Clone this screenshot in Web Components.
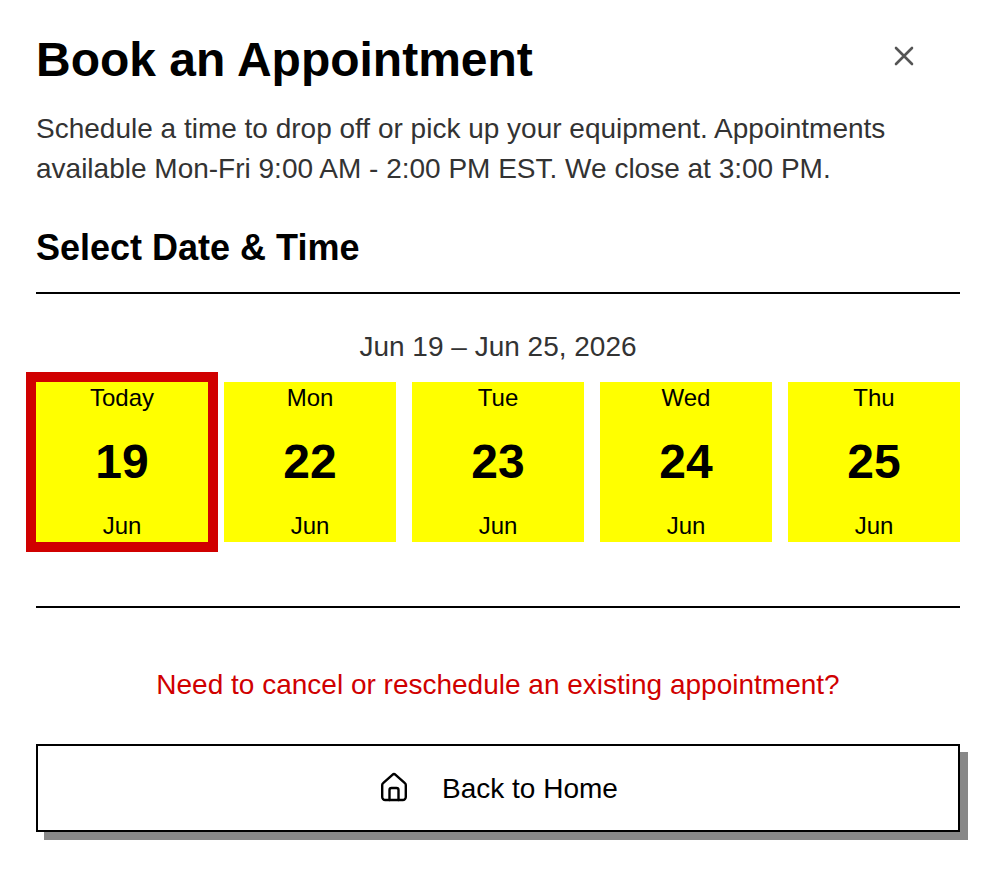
<!DOCTYPE html>
<html>
<head>
<meta charset="utf-8">
<title>Book an Appointment</title>
<style>
  body { margin: 0; background: #fff; font-family: "Liberation Sans", Arial, sans-serif; }
</style>
</head>
<body>
<booking-dialog>
  <date-strip range="Jun 19 – Jun 25, 2026">
    <day-card label="Today" num="19" month="Jun" selected></day-card>
    <day-card label="Mon" num="22" month="Jun"></day-card>
    <day-card label="Tue" num="23" month="Jun"></day-card>
    <day-card label="Wed" num="24" month="Jun"></day-card>
    <day-card label="Thu" num="25" month="Jun"></day-card>
  </date-strip>
</booking-dialog>
<script>
class DayCard extends HTMLElement {
  constructor() {
    super();
    this.attachShadow({ mode: 'open' });
  }
  connectedCallback() {
    this.shadowRoot.innerHTML = `
    <style>
      :host {
        display: flex;
        flex-direction: column;
        align-items: center;
        justify-content: space-between;
        height: 160px;
        background: #ffff00;
        color: #000;
        font-size: 24px;
        line-height: 32px;
      }
      :host([selected]) { outline: 10px solid #d00000; }
      .num { font-size: 48px; font-weight: bold; line-height: 56px; }
    </style>
    <div>${this.getAttribute('label')}</div>
    <div class="num">${this.getAttribute('num')}</div>
    <div>${this.getAttribute('month')}</div>
    `;
  }
}

class DateStrip extends HTMLElement {
  constructor() {
    super();
    this.attachShadow({ mode: 'open' });
  }
  connectedCallback() {
    this.shadowRoot.innerHTML = `
    <style>
      :host {
        display: block;
        border-top: 2px solid #000;
        border-bottom: 2px solid #000;
        padding: 36px 0 64px;
      }
      .range {
        text-align: center;
        font-size: 28px;
        line-height: 34px;
        color: #333;
        margin-bottom: 18px;
      }
      .days { display: grid; grid-template-columns: repeat(5, 1fr); gap: 16px; }
    </style>
    <div class="range">${this.getAttribute('range')}</div>
    <div class="days"><slot></slot></div>
    `;
  }
}

class BackButton extends HTMLElement {
  constructor() {
    super();
    this.attachShadow({ mode: 'open' });
  }
  connectedCallback() {
    this.shadowRoot.innerHTML = `
    <style>
      :host {
        display: flex;
        align-items: center;
        justify-content: center;
        gap: 32px;
        height: 84px;
        border: 2px solid #000;
        background: #fff;
        box-shadow: 8px 8px 0 #888;
        font-size: 28px;
        color: #000;
      }
      svg { display: block; }
      span { padding-top: 2px; }
    </style>
    <svg width="32" height="32" viewBox="0 0 32 32" fill="none" stroke="#000" stroke-width="2.4" stroke-linecap="round" stroke-linejoin="round">
      <path d="M4.2 13 a2.5 2.5 0 0 1 .9 -1.9 L14.4 2.8 a2.4 2.4 0 0 1 3.2 0 L26.9 11.1 a2.5 2.5 0 0 1 .9 1.9 V25 a3 3 0 0 1 -3 3 H7.2 a3 3 0 0 1 -3 -3 Z"/>
      <path d="M11.5 28 V18 a2 2 0 0 1 2 -2 h5 a2 2 0 0 1 2 2 v10"/>
    </svg>
    <span><slot></slot></span>
    `;
  }
}

class BookingDialog extends HTMLElement {
  constructor() {
    super();
    this.attachShadow({ mode: 'open' });
  }
  connectedCallback() {
    this.shadowRoot.innerHTML = `
    <style>
      :host {
        display: block;
        padding: 30px 34px 30px 36px;
        color: #000;
      }
      header { display: flex; justify-content: space-between; align-items: flex-start; }
      h1 { margin: 0; font-size: 48px; line-height: 60px; font-weight: bold; }
      .close { margin: 8px 38px 0 0; display: block; }
      p { margin: 19px 0 0; font-size: 28px; line-height: 40px; color: #333; }
      h2 { margin: 37px 0 22px; font-size: 36px; line-height: 44px; font-weight: bold; }
      .link { text-align: center; color: #d00000; font-size: 28px; line-height: 36px; margin: 59px 0 41px; }
    </style>
    <header>
      <h1>Book an Appointment</h1>
      <svg class="close" width="36" height="36" viewBox="0 0 36 36" fill="none" stroke="#555" stroke-width="2.6" stroke-linecap="round">
        <path d="M10 10 L26 26 M26 10 L10 26"/>
      </svg>
    </header>
    <p>Schedule a time to drop off or pick up your equipment. Appointments available Mon-Fri 9:00 AM - 2:00 PM EST. We close at 3:00 PM.</p>
    <h2>Select Date &amp; Time</h2>
    <slot></slot>
    <div class="link">Need to cancel or reschedule an existing appointment?</div>
    <back-button>Back to Home</back-button>
    `;
  }
}

customElements.define('day-card', DayCard);
customElements.define('date-strip', DateStrip);
customElements.define('back-button', BackButton);
customElements.define('booking-dialog', BookingDialog);
</script>
</body>
</html>
